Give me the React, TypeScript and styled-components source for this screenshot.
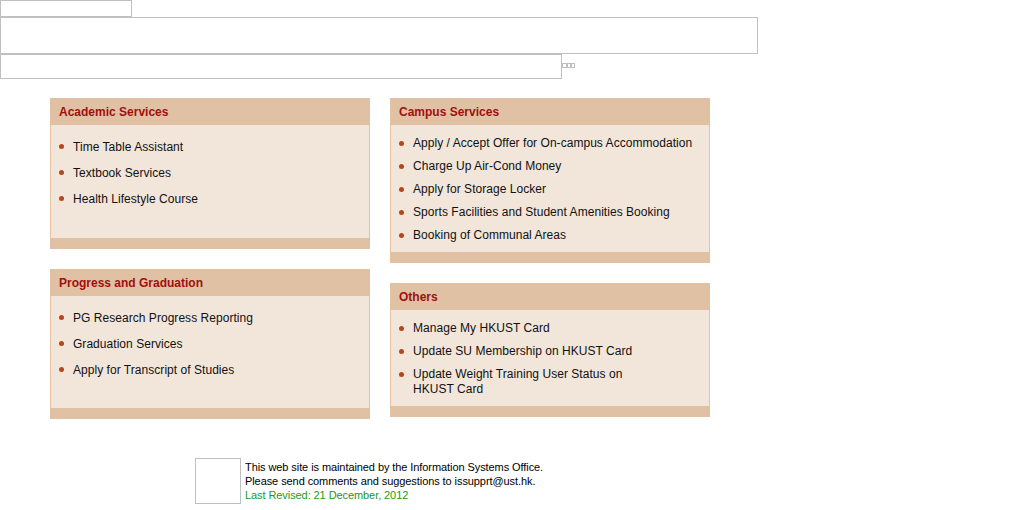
import * as React from 'react';
import styled, { createGlobalStyle } from 'styled-components';


const GlobalStyle = createGlobalStyle`
  body {
    margin: 0;
    background: #ffffff;
    font-family: "Liberation Sans", Arial, sans-serif;
    font-size: 12px;
    color: #000000;
  }
`;


interface Section {
    title: string
    items: Array<React.ReactNode>
    spacing: number
    lineHeight: number
    padTop: number
    padBottom: number
}


const leftColumn: Array<Section> = [
    {
        title: 'Academic Services',
        items: ['Time Table Assistant', 'Textbook Services', 'Health Lifestyle Course'],
        spacing: 12, lineHeight: 14, padTop: 15, padBottom: 32
    },
    {
        title: 'Progress and Graduation',
        items: ['PG Research Progress Reporting', 'Graduation Services', 'Apply for Transcript of Studies'],
        spacing: 12, lineHeight: 14, padTop: 15, padBottom: 31
    },
];

const rightColumn: Array<Section> = [
    {
        title: 'Campus Services',
        items: [
            'Apply / Accept Offer for On-campus Accommodation',
            'Charge Up Air-Cond Money',
            'Apply for Storage Locker',
            'Sports Facilities and Student Amenities Booking',
            'Booking of Communal Areas',
        ],
        spacing: 8, lineHeight: 15, padTop: 11, padBottom: 9
    },
    {
        title: 'Others',
        items: [
            'Manage My HKUST Card',
            'Update SU Membership on HKUST Card',
            <>Update Weight Training User Status on<br />HKUST Card</>,
        ],
        spacing: 8, lineHeight: 15, padTop: 11, padBottom: 9
    },
];


const Banner = styled.div`
  display: flex;
  flex-direction: column;
  align-items: flex-start;
`;

const BrokenImage = styled.div<{ w: number, h: number }>`
  box-sizing: border-box;
  width: ${p => p.w}px;
  height: ${p => p.h}px;
  border: 1px solid #c0c0c0;
  flex: none;
`;

const BannerRow = styled.div`
  display: flex;
  align-items: flex-start;
`;

const Spacers = styled.div`
  display: flex;
  margin-top: 9px;
`;

const Columns = styled.div`
  display: flex;
  align-items: flex-start;
  gap: 20px;
  padding: 19px 0 0 50px;
`;

const Column = styled.div<{ gap: number }>`
  display: flex;
  flex-direction: column;
  gap: ${p => p.gap}px;
  width: 320px;
`;

const Panel = styled.div`
  background: #e0c1a3;
  padding: 0 1px 11px;
`;

const PanelTitle = styled.div`
  box-sizing: border-box;
  height: 27px;
  padding: 2px 0 0 8px;
  line-height: 25px;
  font-weight: bold;
  font-size: 12px;
  color: #a00f0f;
`;

const PanelBody = styled.ul<{ padTop: number, padBottom: number }>`
  margin: 0;
  list-style: none;
  background: #f2e6db;
  padding: ${p => p.padTop}px 10px ${p => p.padBottom}px 22px;
`;

const Item = styled.li<{ spacing: number, lh: number }>`
  position: relative;
  line-height: ${p => p.lh}px;
  color: #111111;
  letter-spacing: 0.04px;
  &:not(:first-child) {
    margin-top: ${p => p.spacing}px;
  }
  &::before {
    content: '';
    position: absolute;
    left: -14px;
    top: ${p => Math.round(p.lh / 2) - 3}px;
    width: 5px;
    height: 5px;
    border-radius: 50%;
    background: #b5471c;
  }
`;

const Footer = styled.div`
  display: flex;
  gap: 4px;
  margin: 39px 0 0 195px;
  font-size: 11px;
  line-height: 14px;
  letter-spacing: -0.08px;
  color: #000000;
`;

const FooterText = styled.div`
  padding-top: 2px;
`;

const Revised = styled.div`
  color: #1a9a1a;
`;


function ServicePanel({ section }: { section: Section }) {
    return (
        <Panel>
            <PanelTitle>{section.title}</PanelTitle>
            <PanelBody padTop={section.padTop} padBottom={section.padBottom}>
                { section.items.map((item, i) => (
                    <Item key={i} spacing={section.spacing} lh={section.lineHeight}>{item}</Item>
                )) }
            </PanelBody>
        </Panel>
    );
}


export default function App() {
    return (
        <>
            <GlobalStyle />
            <Banner>
                <BrokenImage w={132} h={17} />
                <BrokenImage w={758} h={37} />
                <BannerRow>
                    <BrokenImage w={562} h={25} />
                    <Spacers>
                        <BrokenImage w={5} h={5} />
                        <BrokenImage w={4} h={5} />
                        <BrokenImage w={4} h={5} />
                    </Spacers>
                </BannerRow>
            </Banner>
            <Columns>
                <Column gap={20}>
                    { leftColumn.map(s => <ServicePanel key={s.title} section={s} />) }
                </Column>
                <Column gap={20}>
                    { rightColumn.map(s => <ServicePanel key={s.title} section={s} />) }
                </Column>
            </Columns>
            <Footer>
                <BrokenImage w={46} h={46} />
                <FooterText>
                    <div>This web site is maintained by the Information Systems Office.</div>
                    <div>Please send comments and suggestions to issupprt@ust.hk.</div>
                    <Revised>Last Revised: 21 December, 2012</Revised>
                </FooterText>
            </Footer>
        </>
    );
}
